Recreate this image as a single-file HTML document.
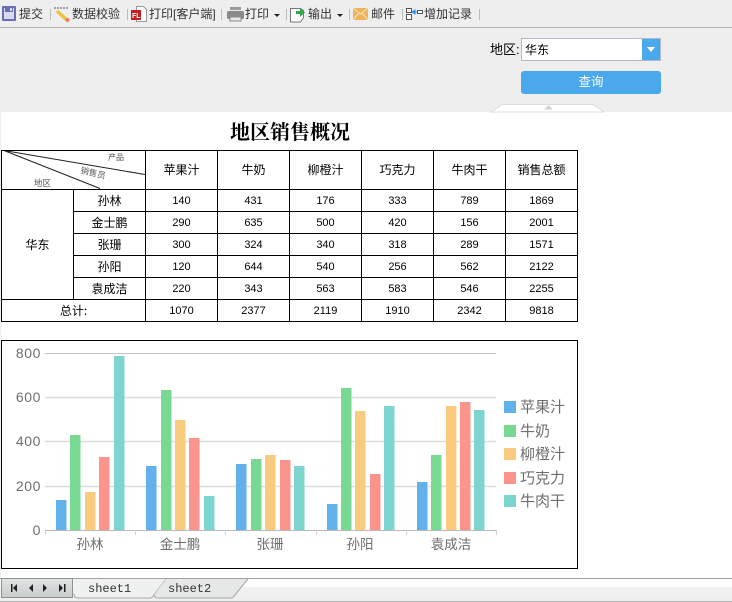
<!DOCTYPE html>
<html lang="zh"><head><meta charset="utf-8"><style>
html,body{margin:0;padding:0}
body{width:732px;height:602px;overflow:hidden;position:relative;background:#fff;font-family:"Liberation Sans","Noto Sans CJK SC",sans-serif;color:#000}
.a{position:absolute}
.t{position:absolute;font-size:12px;line-height:14px;top:7px;color:#333;white-space:nowrap}
.sep{position:absolute;top:9px;width:1px;height:11px;background:#bbb}
svg{position:absolute;left:0;top:0}
table{position:absolute;left:1px;top:150px;border-collapse:collapse;table-layout:fixed;width:577px;font-family:"WenQuanYi Zen Hei","Noto Sans CJK SC",sans-serif}
td{border:1px solid #000;padding:0;text-align:center;font-size:12px;height:22px;line-height:14px;box-sizing:border-box}
td.n{font-family:"Liberation Sans",sans-serif;font-size:11px}
</style></head><body>
<div class="a" style="left:0;top:0;width:732px;height:112px;background:#eeeeee"></div>
<div class="a" style="left:0;top:27px;width:732px;height:1px;background:#b4b4b4"></div>
<div class="a" style="left:0;top:112px;width:1px;height:466px;background:#eeeeee"></div>

<span class="t" style="left:19px">提交</span>
<span class="sep" style="left:50px"></span>
<span class="t" style="left:72px">数据校验</span>
<span class="sep" style="left:127px"></span>
<span class="t" style="left:149px">打印[客户端]</span>
<span class="sep" style="left:221px"></span>
<span class="t" style="left:245px">打印</span>
<span class="sep" style="left:286px"></span>
<span class="t" style="left:308px">输出</span>
<span class="sep" style="left:349px"></span>
<span class="t" style="left:371px">邮件</span>
<span class="sep" style="left:402px"></span>
<span class="t" style="left:424px">增加记录</span>
<span class="sep" style="left:479px"></span>

<svg width="732" height="602" viewBox="0 0 732 602">
<!-- save -->
<rect x="2" y="6" width="14" height="15" fill="#6a6eb5" rx="1"/><rect x="4" y="8" width="10" height="11" fill="#d9daee"/><rect x="5" y="7" width="8" height="5" fill="#6a6eb5"/><rect x="10" y="8" width="2" height="3" fill="#d9daee"/>
<!-- ruler pen -->
<path d="M54 8h14" stroke="#555" stroke-width="1" stroke-dasharray="2 1"/>
<path d="M57 11l10 9" stroke="#f0c040" stroke-width="3.5"/><path d="M66 19l3 2" stroke="#e88060" stroke-width="3.5"/>
<!-- fl doc -->
<path d="M136.500 6.500h7l3 3v12h-10z" fill="#fff" stroke="#999"/><rect x="131" y="10" width="10" height="10" fill="#c3201f"/>
<text x="132" y="18" font-size="7" font-weight="bold" fill="#fff" font-family="Liberation Sans">FL</text>
<!-- printer -->
<rect x="227" y="11" width="17" height="8" rx="1.500" fill="#8a8a8a"/><rect x="230" y="7" width="11" height="3" fill="#9a9a9a"/><rect x="230" y="17" width="11" height="4" fill="#e8e8e8" stroke="#8a8a8a"/>
<path d="M274 14h6l-3 3z" fill="#222"/>
<!-- export -->
<path d="M290.500 8.500h10l3 2v7l-3 4.500h-10z" fill="#fff" stroke="#777"/><path d="M296 11h4v-3l5 4.500-5 4.500v-3h-4z" fill="#2fa84a"/>
<path d="M337 14h6l-3 3z" fill="#222"/>
<!-- mail -->
<rect x="353" y="8" width="15" height="12" fill="#edb25c"/><path d="M353 8l7.500 6 7.500-6M353 20l6-7M368 20l-6-7" stroke="#f8e2bb" fill="none"/>
<!-- add record -->
<path d="M406.500 8.500h5v4h-5zM406.500 14.500h5v5h-5zM417.500 10.500h5v3h-5z" fill="#fff" stroke="#555"/><path d="M412 12l3-2v4zM414 12h3" fill="#2d8fe0" stroke="#2d8fe0"/>
<!-- collapse handle -->
<path d="M491 112l11-7.500h91l11 7.500z" fill="#fff" stroke="#dcdcdc"/><path d="M544 109.500l4.500-4 4.500 4z" fill="#cfcfcf"/>
<!-- diagonal header -->
<path d="M4 150.500L145 174.500M4 150.500L100 188.500" stroke="#222" stroke-width="1" fill="none"/>
<text x="108" y="160" font-size="8" fill="#555">产品</text>
<text x="0" y="0" font-size="8.500" fill="#555" transform="translate(80 173) rotate(13)">销售员</text>
<text x="34" y="186" font-size="8.500" fill="#555">地区</text>

<!-- chart frame -->
<rect x="1.500" y="340.500" width="576" height="228" fill="#fff" stroke="#000"/>
<path d="M45 397.500h451M45 441.500h451M45 486.500h451" stroke="#dcdcdc" stroke-width="1.500"/>
<path d="M45 353.500h451" stroke="#c4c4c4"/>
<path d="M45 530.500h451" stroke="#b8b8b8"/>
<path d="M45.500 530v5M135.500 530v5M225.500 530v5M316.500 530v5M406.500 530v5M496.500 530v5" stroke="#d4d4d4"/>
<g font-size="14" fill="#6e6e6e" text-anchor="end" font-family="Liberation Sans" letter-spacing=".6">
<text x="41" y="358">800</text><text x="41" y="402">600</text><text x="41" y="446">400</text><text x="41" y="491">200</text><text x="41" y="535">0</text>
</g>
<g font-size="13.500" fill="#6e6e6e" text-anchor="middle" font-family="Noto Sans CJK SC,sans-serif">
<text x="90" y="549">孙林</text><text x="180" y="549">金士鹏</text><text x="270" y="549">张珊</text><text x="360" y="549">孙阳</text><text x="451" y="549">袁成洁</text>
</g>
<!-- bars -->
<g fill="#62b0ec">
<rect x="56" y="500" width="10.500" height="30"/><rect x="146" y="466" width="10.500" height="64"/><rect x="236" y="464" width="10.500" height="66"/><rect x="327" y="504" width="10.500" height="26"/><rect x="417" y="482" width="10.500" height="48"/>
</g>
<g fill="#78da92">
<rect x="70" y="435" width="10.500" height="95"/><rect x="161" y="390" width="10.500" height="140"/><rect x="251" y="459" width="10.500" height="71"/><rect x="341" y="388" width="10.500" height="142"/><rect x="431" y="455" width="10.500" height="75"/>
</g>
<g fill="#f9cb7e">
<rect x="85" y="492" width="10.500" height="38"/><rect x="175" y="420" width="10.500" height="110"/><rect x="265" y="455" width="10.500" height="75"/><rect x="355" y="411" width="10.500" height="119"/><rect x="446" y="406" width="10.500" height="124"/>
</g>
<g fill="#fb948c">
<rect x="99" y="457" width="10.500" height="73"/><rect x="189" y="438" width="10.500" height="92"/><rect x="280" y="460" width="10.500" height="70"/><rect x="370" y="474" width="10.500" height="56"/><rect x="460" y="402" width="10.500" height="128"/>
</g>
<g fill="#7cd6cf">
<rect x="114" y="356" width="10.500" height="174"/><rect x="204" y="496" width="10.500" height="34"/><rect x="294" y="466" width="10.500" height="64"/><rect x="384" y="406" width="10.500" height="124"/><rect x="474" y="410" width="10.500" height="120"/>
</g>
<!-- legend -->
<rect x="504" y="401" width="12" height="12" fill="#62b0ec"/><rect x="504" y="425" width="12" height="12" fill="#78da92"/><rect x="504" y="448" width="12" height="12" fill="#f9cb7e"/><rect x="504" y="472" width="12" height="12" fill="#fb948c"/><rect x="504" y="495" width="12" height="12" fill="#7cd6cf"/>
<g font-size="15" fill="#6e6e6e" font-family="Noto Sans CJK SC,sans-serif">
<text x="520" y="412">苹果汁</text><text x="520" y="436">牛奶</text><text x="520" y="459">柳橙汁</text><text x="520" y="483">巧克力</text><text x="520" y="506">牛肉干</text>
</g>
</svg>

<!-- filter form -->
<div class="a" style="left:490px;top:42px;font-size:13px;line-height:16px;white-space:nowrap">地区:</div>
<div class="a" style="left:521px;top:38px;width:140px;height:23px;box-sizing:border-box;border:1px solid #b5b8c8;background:#fff;font-size:12px;line-height:22px;padding-left:3px">华东</div>
<div class="a" style="left:642px;top:39px;width:18px;height:21px;background:#4aa8ec"></div>
<div class="a" style="left:647px;top:47px;width:0;height:0;border-left:4px solid transparent;border-right:4px solid transparent;border-top:5px solid #fff"></div>
<div class="a" style="left:521px;top:71px;width:140px;height:23px;background:#4aa8ec;border-radius:3px;color:#fff;text-align:center;font-size:12.500px;line-height:23px">查询</div>

<!-- title -->
<div class="a" style="left:230px;top:119px;font-size:20px;line-height:24px;font-weight:bold;font-family:'Noto Serif CJK SC',serif;white-space:nowrap;letter-spacing:0">地区销售概况</div>

<table>
<colgroup><col style="width:72px"><col style="width:72px"><col span="6" style="width:72px"></colgroup>
<tr style="height:39px"><td colspan="2" style="height:39px"></td><td>苹果汁</td><td>牛奶</td><td>柳橙汁</td><td>巧克力</td><td>牛肉干</td><td>销售总额</td></tr>
<tr><td rowspan="5">华东</td><td>孙林</td><td class="n">140</td><td class="n">431</td><td class="n">176</td><td class="n">333</td><td class="n">789</td><td class="n">1869</td></tr>
<tr><td>金士鹏</td><td class="n">290</td><td class="n">635</td><td class="n">500</td><td class="n">420</td><td class="n">156</td><td class="n">2001</td></tr>
<tr><td>张珊</td><td class="n">300</td><td class="n">324</td><td class="n">340</td><td class="n">318</td><td class="n">289</td><td class="n">1571</td></tr>
<tr><td>孙阳</td><td class="n">120</td><td class="n">644</td><td class="n">540</td><td class="n">256</td><td class="n">562</td><td class="n">2122</td></tr>
<tr><td>袁成洁</td><td class="n">220</td><td class="n">343</td><td class="n">563</td><td class="n">583</td><td class="n">546</td><td class="n">2255</td></tr>
<tr><td colspan="2">总计:</td><td class="n">1070</td><td class="n">2377</td><td class="n">2119</td><td class="n">1910</td><td class="n">2342</td><td class="n">9818</td></tr>
</table>

<!-- footer -->
<div class="a" style="left:0;top:578px;width:732px;height:1px;background:#a0a0a0"></div>
<div class="a" style="left:0;top:587px;width:732px;height:14px;background:linear-gradient(#f1f1f1,#eeeeee)"></div>
<div class="a" style="left:0;top:601px;width:732px;height:1px;background:#b4b4b4"></div>
<div class="a" style="left:1px;top:578px;width:72px;height:20px;box-sizing:border-box;border:1px solid #8e8e8e;background:linear-gradient(#e0e4e4,#c8cccc)"></div>
<svg width="732" height="602" viewBox="0 0 732 602">
<path d="M11 584h1.500v8H11zM13 588l4-4v8z" fill="#222"/>
<path d="M29 588l4-4v8z" fill="#222"/>
<path d="M47 588l-4-4v8z" fill="#222"/>
<path d="M63 588l-4-4v8zM64 584h1.500v8H64z" fill="#222"/>
<path d="M74 579h92l-13 17q-1 2-3 2H78q-4 0-4-3z" fill="#eff1f1"/>
<path d="M74 594q0 4 4 4h72q2 0 3-2l13-17" fill="none" stroke="#a8a8a8"/>
<path d="M166 579h82l-14 17q-1 2-3 2H158q-4 0-4-3z" fill="#e6e7e7"/>
<path d="M154 594q0 4 4 4h73q2 0 3-2l14-17" fill="none" stroke="#a8a8a8"/>
<g font-family="Liberation Mono,monospace" font-size="12" fill="#333"><text x="88" y="592">sheet1</text><text x="168" y="592">sheet2</text></g>
</svg>
</body></html>
